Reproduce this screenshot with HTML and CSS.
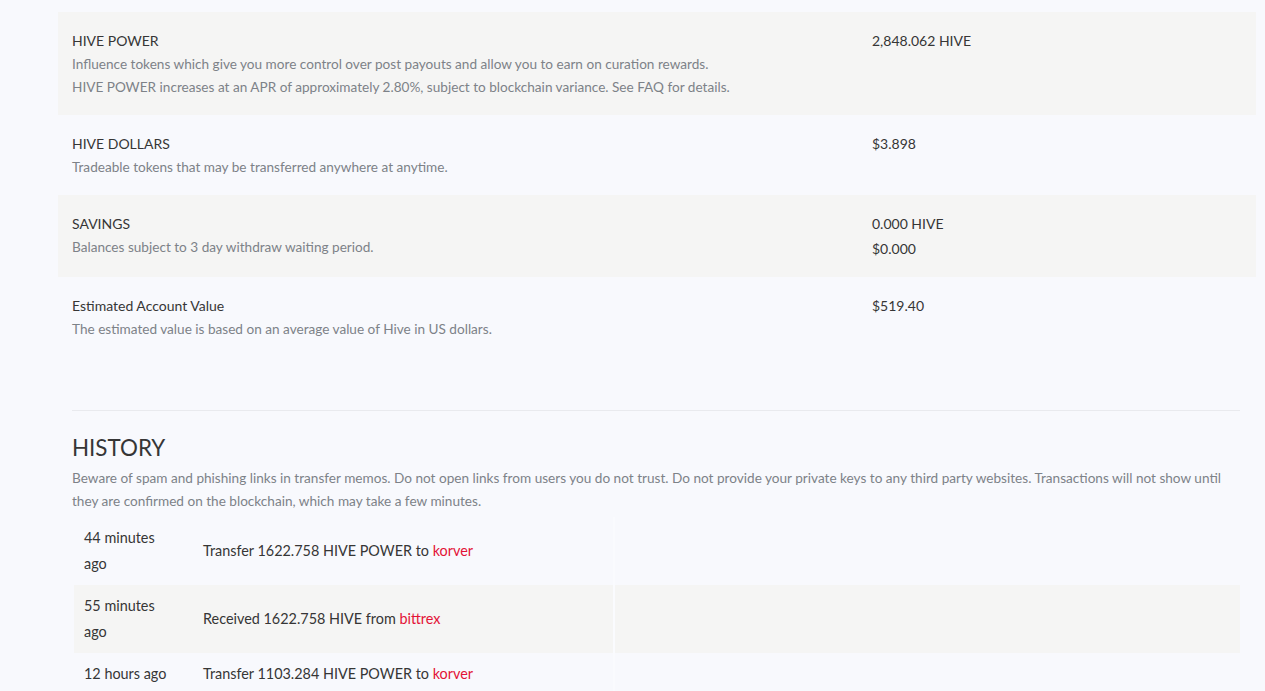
FILE: index.html
```html
<!DOCTYPE html>
<html lang="en">
<head>
  <meta charset="UTF-8">
  <meta name="viewport" content="width=device-width, initial-scale=1.0">
  <title>Wallet</title>
  <link rel="stylesheet" href="styles.css">
</head>
<body>
  <div class="wallet">
    <!-- Balances -->
    <div class="balances">
      <div class="balance-row striped">
        <div class="info">
          <div class="label">HIVE POWER</div>
          <div class="desc">Influence tokens which give you more control over post payouts and allow you to earn on curation rewards.</div>
          <div class="desc">HIVE POWER increases at an APR of approximately 2.80%, subject to blockchain variance. See FAQ for details.</div>
        </div>
        <div class="amount">2,848.062 HIVE</div>
      </div>

      <div class="balance-row">
        <div class="info">
          <div class="label">HIVE DOLLARS</div>
          <div class="desc">Tradeable tokens that may be transferred anywhere at anytime.</div>
        </div>
        <div class="amount">$3.898</div>
      </div>

      <div class="balance-row striped">
        <div class="info">
          <div class="label">SAVINGS</div>
          <div class="desc">Balances subject to 3 day withdraw waiting period.</div>
        </div>
        <div class="amount">
          <div>0.000 HIVE</div>
          <div>$0.000</div>
        </div>
      </div>

      <div class="balance-row">
        <div class="info">
          <div class="label">Estimated Account Value</div>
          <div class="desc">The estimated value is based on an average value of Hive in US dollars.</div>
        </div>
        <div class="amount">$519.40</div>
      </div>
    </div>

    <!-- History -->
    <div class="history">
      <h2>HISTORY</h2>
      <p class="notice">Beware of spam and phishing links in transfer memos. Do not open links from users you do not trust. Do not provide your private keys to any third party websites. Transactions will not show until they are confirmed on the blockchain, which may take a few minutes.</p>
      <table class="history-table">
        <tr>
          <td class="time">44 minutes ago</td>
          <td class="op">Transfer 1622.758 HIVE POWER to <a href="#">korver</a></td>
          <td class="memo"></td>
        </tr>
        <tr class="striped">
          <td class="time">55 minutes ago</td>
          <td class="op">Received 1622.758 HIVE from <a href="#">bittrex</a></td>
          <td class="memo"></td>
        </tr>
        <tr>
          <td class="time">12 hours ago</td>
          <td class="op">Transfer 1103.284 HIVE POWER to <a href="#">korver</a></td>
          <td class="memo"></td>
        </tr>
      </table>
    </div>
  </div>
</body>
</html>
```

FILE: styles.css
```css
body {
  margin: 0;
  background-color: #f8f9fd;
  color: #363636;
  font-family: Lato, "Liberation Sans", sans-serif;
}
.wallet {
  width: 1198px;
  margin: 12px 0 0 58px;
}
.balance-row {
  display: grid;
  grid-template-columns: 800px 1fr;
  padding: 16px 14px;
}
.striped {
  background-color: #f5f5f4;
}
.label, .amount {
  font-size: 14px;
  line-height: 25px;
}
.desc {
  font-size: 13.6px;
  line-height: 23px;
  color: #7d8288;
}
/* History section */
.history {
  margin: 53px 16px 0 14px;
  border-top: 1px solid #e9eaee;
}
.history h2 {
  margin: 22px 0 4px;
  font-size: 22.4px;
  font-weight: 400;
  line-height: 30px;
}
.notice {
  margin: 0 0 4px;
  font-size: 13.6px;
  line-height: 23px;
  color: #7d8288;
}
.history-table {
  width: 1166px;
  margin-left: 2px;
  border-collapse: collapse;
  font-size: 14.4px;
  line-height: 26px;
}
.history-table td {
  padding: 8px 10px;
  vertical-align: middle;
}
.history-table .time {
  width: 92px;
  padding-right: 17px;
}
.history-table .op {
  width: 400px;
}
.history-table .memo {
  border-left: 2px solid #fafbfe;
}
a {
  color: #e31337;
  text-decoration: none;
}
```
